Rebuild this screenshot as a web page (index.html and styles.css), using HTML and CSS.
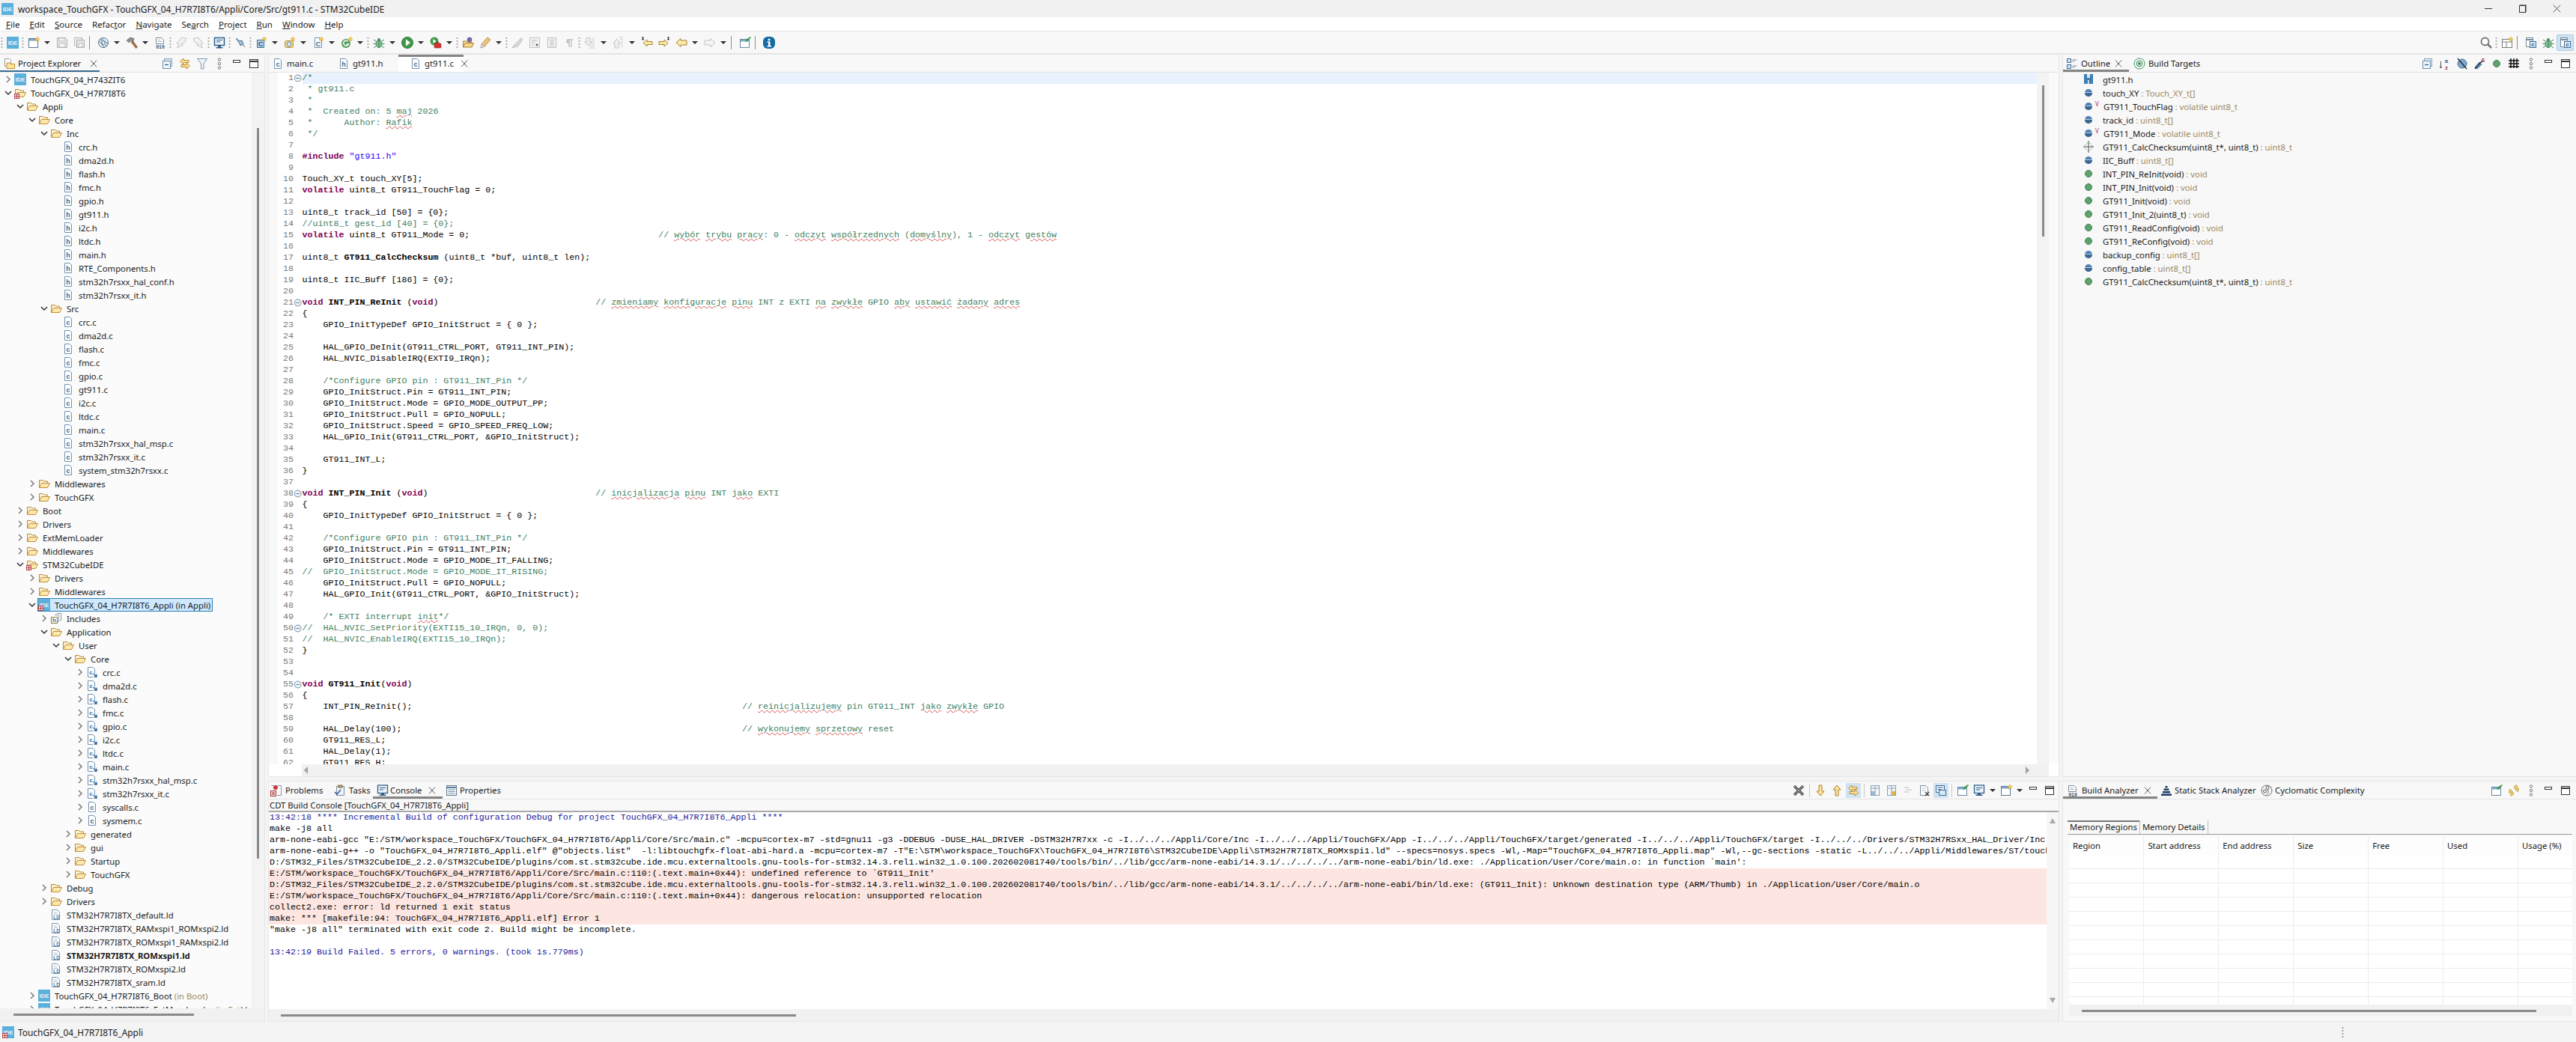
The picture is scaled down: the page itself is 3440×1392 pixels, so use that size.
FILE: index.html
```html
<!DOCTYPE html>
<html lang="en">
<head>
    <meta charset="UTF-8">
    <title>workspace_TouchGFX - STM32CubeIDE</title>
    <link rel="stylesheet" href="styles.css">
</head>
<body>
    <!-- Icon set -->
    <svg class="defs" xmlns="http://www.w3.org/2000/svg">
        <symbol id="ide" viewBox="0 0 16 16"><rect x="0" y="0" width="16" height="16" fill="#5cb0dc"/><text x="8" y="11" font-size="7.5" font-weight="700" fill="#eaf6fc" text-anchor="middle" font-family="Liberation Sans">IDE</text></symbol>
        <symbol id="mark" viewBox="0 0 16 16"><rect x="0.5" y="9.5" width="6" height="6" fill="#f6dede" stroke="#b5424a"/><path d="M0.5 12.5h6M3.5 9.5v6" stroke="#b5424a"/></symbol>
        <symbol id="folder" viewBox="0 0 16 16"><path d="M1.5 13.5v-10h5l1.5 1.5h4.5v2.5" fill="#fbf0d2" stroke="#b98a35"/><path d="M1.5 13.5l3-6h11l-3 6z" fill="#fde9ad" stroke="#c28f35"/></symbol>
        <symbol id="cfile" viewBox="0 0 16 16"><path d="M3.5 1.5h6.5l2.5 2.5v10.5h-9z" fill="#fff" stroke="#6d93b3"/><text x="8" y="12" font-size="9" font-weight="700" fill="#39688f" text-anchor="middle" font-family="Liberation Sans">c</text></symbol>
        <symbol id="hfile" viewBox="0 0 16 16"><path d="M3.5 1.5h6.5l2.5 2.5v10.5h-9z" fill="#fff" stroke="#6d93b3"/><text x="8" y="12" font-size="9" font-weight="700" fill="#39688f" text-anchor="middle" font-family="Liberation Sans">h</text></symbol>
        <symbol id="clink" viewBox="0 0 16 16"><path d="M2.5 1.5h6.5l2.5 2.5v10.5h-9z" fill="#fff" stroke="#6d93b3"/><text x="6.5" y="11" font-size="8" font-weight="700" fill="#39688f" text-anchor="middle" font-family="Liberation Sans">c</text><path d="M9 9h6v6H9z" fill="#dbe8f3"/><path d="M10 10l4 4m0-3v3h-3" fill="none" stroke="#2d5f8f" stroke-width="1.3"/></symbol>
        <symbol id="ld" viewBox="0 0 16 16"><path d="M2.5 1.5h7l3 3v10h-10z" fill="#fff" stroke="#7b98b0"/><path d="M4.5 5h5M4.5 7.5h6" stroke="#a9bccb"/><text x="8.5" y="14" font-size="6.5" font-weight="700" fill="#3a6f9e" text-anchor="middle" font-family="Liberation Sans">LD</text></symbol>
        <symbol id="incl" viewBox="0 0 16 16"><path d="M9 1.5h5.5v9H13M6 3.5h5.5v9H10" fill="#fff" stroke="#8c9aa5"/><rect x="1.5" y="6.5" width="8" height="8" fill="#fff" stroke="#8c7a45"/><text x="5.5" y="13" font-size="8" font-weight="700" fill="#39688f" text-anchor="middle" font-family="Liberation Sans">h</text></symbol>
        <symbol id="right" viewBox="0 0 12 12"><path d="M4 2l4 4-4 4" fill="none" stroke="#7a7a7a" stroke-width="1.5"/></symbol>
        <symbol id="down" viewBox="0 0 12 12"><path d="M2 4l4 4 4-4" fill="none" stroke="#333" stroke-width="1.5"/></symbol>
        <symbol id="close" viewBox="0 0 16 16"><path d="M3.5 3l9 10M12.5 3l-9 10" fill="none" stroke="#444" stroke-width="1"/></symbol>
        <symbol id="drop" viewBox="0 0 8 8"><path d="M0 2h8L4 6z" fill="#333"/></symbol>
        <symbol id="fold" viewBox="0 0 10 10"><circle cx="5" cy="5" r="3.8" fill="#eef3f8" stroke="#8ba3b8"/><path d="M3 5h4" stroke="#5d7f9c"/></symbol>
        <symbol id="explorer" viewBox="0 0 16 16"><path d="M2.5 1.5h6l2 2v8h-8z" fill="#fff" stroke="#9a9a9a"/><path d="M5 7h4l1 1.5h5.500v6H5z" fill="#fde29a" stroke="#c28f35"/></symbol>
        <symbol id="collapse" viewBox="0 0 16 16"><rect x="3.500" y="1.500" width="10" height="10" fill="#dfeaf4" stroke="#87a3bb"/><rect x="1.500" y="4.500" width="10" height="10" fill="#eef4f9" stroke="#6f8fab"/><path d="M4 9.500h5" stroke="#3b5f80" stroke-width="1.200"/></symbol>
        <symbol id="sync" viewBox="0 0 16 16"><path d="M6 1l-4.500 4 4.500 4V6.500h7v-3H6zM10 7v2.500H3v3h7V15l4.500-4z" fill="#fbe39a" stroke="#c08a2c"/></symbol>
        <symbol id="filter" viewBox="0 0 16 16"><path d="M1.500 1.500h13L10 8v7H6.500V8z" fill="#eef3f8" stroke="#7f9ab2"/></symbol>
        <symbol id="dots" viewBox="0 0 16 16"><circle cx="8" cy="2.500" r="1.700" fill="none" stroke="#777"/><circle cx="8" cy="8" r="1.700" fill="none" stroke="#777"/><circle cx="8" cy="13.500" r="1.700" fill="none" stroke="#777"/></symbol>
        <symbol id="min" viewBox="0 0 16 16"><rect x="3.500" y="3.500" width="9" height="3" fill="#fff" stroke="#333"/></symbol>
        <symbol id="max" viewBox="0 0 16 16"><rect x="2.500" y="2.500" width="11" height="11" fill="#fff" stroke="#333"/><path d="M2.500 5h11" stroke="#333" stroke-width="2"/></symbol>
        <symbol id="new" viewBox="0 0 16 16"><rect x="1.500" y="2.500" width="12" height="12" fill="#fff" stroke="#5b7a94"/><rect x="2" y="3" width="11" height="2.500" fill="#7fa5c6"/><path d="M13 0l1 2 2 .5-1.500 1.500.3 2-1.800-1-1.800 1 .3-2L10 2.500l2-.5z" fill="#f6cf55" stroke="#c9952a" stroke-width=".5"/></symbol>
        <symbol id="save" viewBox="0 0 16 16"><path d="M1.500 1.500h11l2 2v11h-13z" fill="#e8e8e8" stroke="#b0b0b0"/><rect x="4" y="2" width="7" height="4" fill="#f7f7f7" stroke="#bbb"/><rect x="4" y="9" width="8" height="5" fill="#f7f7f7" stroke="#bbb"/></symbol>
        <symbol id="saveall" viewBox="0 0 16 16"><rect x="1.500" y="1.500" width="10" height="10" fill="#eee" stroke="#b8b8b8"/><rect x="4.500" y="4.500" width="10" height="10" fill="#e6e6e6" stroke="#b0b0b0"/><rect x="7" y="9" width="5" height="5" fill="#f8f8f8" stroke="#bbb"/></symbol>
        <symbol id="gear" viewBox="0 0 16 16"><circle cx="8" cy="8" r="6.500" fill="#e5edf4" stroke="#4d6f8d"/><path d="M3 3l10 10M5 2.500l9 7M2.500 6l7 8" stroke="#4d6f8d"/><circle cx="8" cy="8" r="2.200" fill="#fff" stroke="#4d6f8d"/></symbol>
        <symbol id="hammer" viewBox="0 0 16 16"><path d="M7 7l6.500 8.500 2-1.500L9.500 5.500z" fill="#a6713f" stroke="#6e4a26" stroke-width=".6"/><path d="M1 5l5-4 5 1.500-1 3.500-3-1-2.500 3z" fill="#8c8c8c" stroke="#5c5c5c" stroke-width=".6"/></symbol>
        <symbol id="bin" viewBox="0 0 16 16"><path d="M2.500 1.500h7l3 3v5h-10z" fill="#fff" stroke="#7b8a99"/><path d="M4.500 4.500h4M4.500 6.500h6" stroke="#a9b8c4"/><text x="8" y="15.500" font-size="6.500" font-weight="700" fill="#3c5c78" text-anchor="middle" font-family="Liberation Mono">010</text></symbol>
        <symbol id="undo" viewBox="0 0 16 16"><path d="M15 2.500L8.500 1 2 9l3 1L2.500 15l8-4-2-1L13 7z" fill="#f1f1f1" stroke="#c4c4c4"/></symbol>
        <symbol id="redo" viewBox="0 0 16 16"><path d="M1 2.500L7.500 1 14 9l-3 1 2.500 5-8-4 2-1L3 7z" fill="#f1f1f1" stroke="#c4c4c4"/></symbol>
        <symbol id="monitor" viewBox="0 0 16 16"><rect x="1.500" y="1.500" width="13" height="10" fill="#eef5fb" stroke="#2f5f8a" stroke-width="1.500"/><path d="M4 4.500h8M4 7h5" stroke="#2f5f8a"/><path d="M6 12v2H3.500v1.500h9V14H10v-2z" fill="#2f5f8a"/></symbol>
        <symbol id="pin" viewBox="0 0 16 16"><path d="M2 2l5 4 3-1 2 5-4 2-1-3z" fill="#a9c1d6" stroke="#4d6f8d"/><path d="M11 10l3 4" stroke="#666"/></symbol>
        <symbol id="newc" viewBox="0 0 16 16"><path d="M2.500 4.500h9v10h-9z" fill="#b8d4ea" stroke="#3f6c92"/><text x="7" y="13" font-size="9" font-weight="700" fill="#24557f" text-anchor="middle" font-family="Liberation Sans">C</text><path d="M12 0l1 2 2 .5-1.500 1.500.3 2-1.800-1-1.800 1 .3-2L9 2.500l2-.5z" fill="#f6cf55" stroke="#c9952a" stroke-width=".5"/></symbol>
        <symbol id="newl" viewBox="0 0 16 16"><rect x="1.500" y="5.500" width="11" height="9" rx="2" fill="#f7dc97" stroke="#b68b3a"/><circle cx="7" cy="10" r="3" fill="#dfe9f1" stroke="#5c7e9b"/><path d="M12 0l1 2 2 .5-1.500 1.500.3 2-1.800-1-1.800 1 .3-2L9 2.500l2-.5z" fill="#f6cf55" stroke="#c9952a" stroke-width=".5"/></symbol>
        <symbol id="newf" viewBox="0 0 16 16"><path d="M3.500 1.500h6v2h3v11h-9z" fill="#fff" stroke="#6d93b3"/><text x="8" y="12.500" font-size="9" font-weight="700" fill="#39688f" text-anchor="middle" font-family="Liberation Sans">C</text><path d="M12 0l1 2 2 .5-1.500 1.500.3 2-1.800-1-1.800 1 .3-2L9 2.500l2-.5z" fill="#f6cf55" stroke="#c9952a" stroke-width=".5"/></symbol>
        <symbol id="newg" viewBox="0 0 16 16"><circle cx="7" cy="9" r="6" fill="#4d9a57"/><path d="M10 6.500A3.500 3.500 0 1 0 10.500 10H7.500" fill="none" stroke="#fff" stroke-width="1.500"/><path d="M13 0l1 2 2 .5-1.500 1.500.3 2-1.800-1-1.800 1 .3-2L10 2.500l2-.5z" fill="#f6cf55" stroke="#c9952a" stroke-width=".5"/></symbol>
        <symbol id="bug" viewBox="0 0 16 16"><ellipse cx="8" cy="9.500" rx="4" ry="5" fill="#7fbf8e" stroke="#3f7f5f"/><circle cx="8" cy="4" r="2" fill="#4d8f66"/><path d="M4 6L1 4M4 9.500H0.500M4 12.500l-3 2.500M12 6l3-2M12 9.500h3.500M12 12.500l3 2.500M8 5v9" stroke="#3f7f5f"/></symbol>
        <symbol id="run" viewBox="0 0 16 16"><circle cx="8" cy="8" r="7.500" fill="#3e9a49" stroke="#2b7a36"/><path d="M6 3.500l6 4.500-6 4.500z" fill="#fff"/></symbol>
        <symbol id="ext" viewBox="0 0 16 16"><circle cx="6" cy="6" r="5.500" fill="#3e9a49"/><path d="M4.500 3l4 3-4 3z" fill="#fff"/><rect x="6" y="9" width="9" height="6" rx="1" fill="#d1342f" stroke="#9c2320" stroke-width=".6"/><path d="M9 9V7.500h3V9" fill="none" stroke="#9c2320"/></symbol>
        <symbol id="openf" viewBox="0 0 16 16"><path d="M1.500 14V6h5l1 1h5v1.500" fill="#f7e3ab" stroke="#a97e2f"/><path d="M1.500 14l2.500-5.500h11.500L13 14z" fill="#f7d78a" stroke="#a97e2f"/><circle cx="10" cy="4" r="3" fill="#7a67a8" stroke="#53447e" stroke-width=".6"/></symbol>
        <symbol id="crayon" viewBox="0 0 16 16"><path d="M2 15l1-5L11 1l4 3-8 9z" fill="#f1c27d" stroke="#b58a45"/><path d="M2 15l1-5 4 3z" fill="#eee" stroke="#aaa"/></symbol>
        <symbol id="gpen" viewBox="0 0 16 16"><path d="M1 15l2-3L13 1.500l2 2-6 9z" fill="#d8d8d8" stroke="#c0c0c0"/></symbol>
        <symbol id="gdoc" viewBox="0 0 16 16"><rect x="1.500" y="1.500" width="13" height="13" fill="#f4f4f4" stroke="#c2c2c2"/><path d="M4 5h7M4 8h4M9 11l3-2v4zM4 11h3" stroke="#b5b5b5"/></symbol>
        <symbol id="glines" viewBox="0 0 16 16"><rect x="2.500" y="1.500" width="11" height="13" fill="#f6f6f6" stroke="#bdbdbd"/><path d="M5 4.500h6M5 7h6M5 9.500h6M5 12h6" stroke="#b5b5b5"/></symbol>
        <symbol id="para" viewBox="0 0 16 16"><path d="M7 3h6v1.500h-1.500V14H10V4.500H8.800V14H7.300V9A3 3 0 0 1 7 3z" fill="#c4c4c4"/></symbol>
        <symbol id="gdown" viewBox="0 0 16 16"><path d="M3 1.500h5v5h2.500L5.500 12 1 6.500h2z" fill="#efefef" stroke="#c4c4c4"/><path d="M10 3h4M10 6h4M9 9h5M7 12h7M7 15h7" stroke="#c9c9c9"/></symbol>
        <symbol id="gup" viewBox="0 0 16 16"><path d="M3 15V9H1l4.500-6 5 6H8v6z" fill="#efefef" stroke="#c4c4c4"/><path d="M9 1h5M10 4h4M11 7h3M11 10h3M11 13h3" stroke="#c9c9c9"/></symbol>
        <symbol id="yl" viewBox="0 0 16 16"><path d="M7 2.500L1 8l6 5.500V11h8V5H7z" fill="#fbe9a8" stroke="#a9822e"/></symbol>
        <symbol id="yr" viewBox="0 0 16 16"><path d="M9 2.500L15 8l-6 5.500V11H1V5h8z" fill="#fbe9a8" stroke="#a9822e"/></symbol>
        <symbol id="yls" viewBox="0 0 16 16"><path d="M8 4L3 8.500 8 13v-2.500h7v-4H8z" fill="#fbe9a8" stroke="#a9822e"/><path d="M1 1l3 3M4 1L1 4M2.500 0v5" stroke="#444"/></symbol>
        <symbol id="yrs" viewBox="0 0 16 16"><path d="M8 4l5 4.500L8 13v-2.500H1v-4h7z" fill="#fbe9a8" stroke="#a9822e"/><path d="M12 1l3 3M15 1l-3 3M13.500 0v5" stroke="#444"/></symbol>
        <symbol id="gr" viewBox="0 0 16 16"><path d="M9 2.500L15 8l-6 5.500V11H1V5h8z" fill="#f4f4f4" stroke="#c2c2c2"/></symbol>
        <symbol id="task" viewBox="0 0 16 16"><rect x="1.500" y="3.500" width="12" height="11" fill="#fff" stroke="#6a8aa5"/><rect x="2" y="4" width="11" height="2.500" fill="#88add0"/><path d="M15 0l1 1-5 5-3 1 1-3z" fill="#3e9a49"/></symbol>
        <symbol id="info" viewBox="0 0 16 16"><rect x="0" y="0" width="16" height="16" rx="6" fill="#146ca3"/><circle cx="8" cy="4" r="1.500" fill="#fff"/><path d="M5.500 6.500H9.500V12H11v1.500H5.500V12H7V8H5.500z" fill="#fff"/></symbol>
        <symbol id="search" viewBox="0 0 16 16"><circle cx="6.500" cy="6.500" r="5" fill="#fff" stroke="#777" stroke-width="1.800"/><path d="M10 10l5 5" stroke="#777" stroke-width="2.500"/></symbol>
        <symbol id="persp" viewBox="0 0 16 16"><rect x="1.500" y="3.500" width="13" height="11" fill="#fff" stroke="#7b7b7b"/><path d="M1.500 7h13M7 7v7.500" stroke="#7b7b7b"/><path d="M13 0l1 2 2 .5-1.500 1.500.3 2-1.800-1-1.800 1 .3-2L10 2.500l2-.5z" fill="#f6cf55" stroke="#c9952a" stroke-width=".5"/></symbol>
        <symbol id="pc" viewBox="0 0 16 16"><rect x="1.500" y="1.500" width="9" height="12" fill="#fff" stroke="#7a8a99"/><path d="M1.500 4h9" stroke="#7a8a99" stroke-width="2"/><rect x="6.500" y="6.500" width="8" height="8" fill="#e3f0f9" stroke="#3b6a95"/><text x="10.500" y="13" font-size="8" font-weight="700" fill="#24557f" text-anchor="middle" font-family="Liberation Sans">c</text></symbol>
        <symbol id="outline" viewBox="0 0 16 16"><rect x="1.500" y="1.500" width="5" height="5" fill="#cfe0ee" stroke="#3f6f98"/><rect x="1.500" y="9.500" width="5" height="5" fill="#cfe0ee" stroke="#3f6f98"/><path d="M8.500 3h6M8.500 5h3M8.500 11h6M8.500 13h3" stroke="#7a8a99"/></symbol>
        <symbol id="target" viewBox="0 0 16 16"><circle cx="8" cy="8" r="7" fill="#fff" stroke="#3f8f5f"/><circle cx="8" cy="8" r="4" fill="#cfe8d5" stroke="#3f8f5f"/><circle cx="8" cy="8" r="1.700" fill="#2f7f4f"/></symbol>
        <symbol id="az" viewBox="0 0 16 16"><path d="M2.500 5v9M1 12l1.500 2L4 12" fill="none" stroke="#555"/><text x="10" y="7" font-size="8" font-weight="700" fill="#2f6f9e" text-anchor="middle" font-family="Liberation Sans">a</text><text x="10" y="15.500" font-size="8" font-weight="700" fill="#9d3b7d" text-anchor="middle" font-family="Liberation Sans">z</text></symbol>
        <symbol id="hidef" viewBox="0 0 16 16"><circle cx="8" cy="8" r="6" fill="#7da8cf" stroke="#3f6f98"/><path d="M2 1l12 14" stroke="#223" stroke-width="1.300"/></symbol>
        <symbol id="hides" viewBox="0 0 16 16"><path d="M2 13l6-7 3 3-6 6z" fill="#7da8cf" stroke="#3f6f98"/><path d="M2 15L12 4" stroke="#223" stroke-width="1.200"/><text x="13" y="6" font-size="6.500" font-weight="700" fill="#a5325a" text-anchor="middle" font-family="Liberation Sans">S</text></symbol>
        <symbol id="hidem" viewBox="0 0 16 16"><path d="M4 1v13M8 1v13M12 1v13M1 4h14M1 8h14M1 12h14" stroke="#111" stroke-width="1.500"/></symbol>
        <symbol id="gdot" viewBox="0 0 16 16"><circle cx="8" cy="8" r="4.500" fill="#5da36b" stroke="#3f8050"/></symbol>
        <symbol id="bdot" viewBox="0 0 16 16"><circle cx="8" cy="8" r="5" fill="#4f82b8"/><path d="M3 8a5 5 0 0 0 10 0z" fill="#3c6894"/><path d="M3 7.500h10" stroke="#fff" stroke-opacity=".6"/></symbol>
        <symbol id="inc" viewBox="0 0 16 16"><path d="M2 1h12v13H8.500V9H7v5H2z" fill="#3d7fb3"/><path d="M6 1h4v5H6z" fill="#d8e7f3"/></symbol>
        <symbol id="proto" viewBox="0 0 16 16"><circle cx="8" cy="8" r="5" fill="none" stroke="#6aa57a" stroke-dasharray="2 1.500"/><path d="M8 0v16M1 8h14" stroke="#555"/></symbol>
        <symbol id="cross" viewBox="0 0 16 16"><path d="M2 2l12 12M14 2L2 14" stroke="#555" stroke-width="3.500"/><path d="M2 2l12 12M14 2L2 14" stroke="#aaa" stroke-width="1"/></symbol>
        <symbol id="ydown" viewBox="0 0 16 16"><path d="M6 1h4v8h3l-5 6-5-6h3z" fill="#fbe39a" stroke="#a9822e"/></symbol>
        <symbol id="yup" viewBox="0 0 16 16"><path d="M6 15h4V7h3L8 1 3 7h3z" fill="#fbe39a" stroke="#a9822e"/></symbol>
        <symbol id="twolocks" viewBox="0 0 16 16"><rect x="2.500" y="1.500" width="11" height="13" fill="#f3f6f9" stroke="#8aa0b3"/><path d="M2.500 5h11M8 1.500v13" stroke="#8aa0b3"/><rect x="3" y="9" width="5" height="5" fill="#9db7cd"/></symbol>
        <symbol id="twolock2" viewBox="0 0 16 16"><rect x="2.500" y="1.500" width="11" height="13" fill="#f3f6f9" stroke="#8aa0b3"/><path d="M2.500 5h11M8 1.500v13" stroke="#8aa0b3"/><rect x="8" y="9" width="5" height="5" fill="#e0b44c"/></symbol>
        <symbol id="glist" viewBox="0 0 16 16"><path d="M3 4h6M5 7h8M3 10h6" stroke="#bdbdbd"/></symbol>
        <symbol id="clearx" viewBox="0 0 16 16"><path d="M2.500 1.500h7l3 3v10h-10z" fill="#fff" stroke="#7a8a99"/><path d="M4.500 5h5M4.500 8h5" stroke="#a9b8c4"/><path d="M9 10l5 5M14 10l-5 5" stroke="#444" stroke-width="1.500"/></symbol>
        <symbol id="pinc" viewBox="0 0 16 16"><rect x="1.500" y="1.500" width="11" height="9" fill="#eef5fb" stroke="#3f6f98"/><path d="M3.500 4h7M3.500 6.500h5" stroke="#3f6f98"/><rect x="5.500" y="7.500" width="9" height="7" fill="#d7e8f5" stroke="#3f6f98"/></symbol>
        <symbol id="problems" viewBox="0 0 16 16"><circle cx="7" cy="4" r="3" fill="#c9343a"/><path d="M1.500 1.500h3M10 1.500h4.500v13H9" fill="none" stroke="#8a9aa8"/><rect x="0.500" y="8.500" width="7" height="7" fill="#f1dcdc" stroke="#a33"/><path d="M2 10l4 4M6 10l-4 4" stroke="#a33"/></symbol>
        <symbol id="tasks" viewBox="0 0 16 16"><rect x="3.500" y="2.500" width="10" height="12" fill="#f1f4f8" stroke="#7f8f9e"/><rect x="6" y="1" width="5" height="3" fill="#b9a46a" stroke="#7f6f3e"/><path d="M1 10l3 3 5-6" fill="none" stroke="#2f5fa0" stroke-width="1.600"/></symbol>
        <symbol id="console" viewBox="0 0 16 16"><rect x="1.500" y="1" width="13" height="10.500" fill="#eaf2f9" stroke="#2f5f8a" stroke-width="1.300"/><path d="M4 4.500h8M4 7h5" stroke="#2f5f8a"/><path d="M6 12v1.500H3.500V15h9v-1.500H10V12z" fill="#2f5f8a"/></symbol>
        <symbol id="props" viewBox="0 0 16 16"><rect x="1.500" y="1.500" width="13" height="13" fill="#f3f6f9" stroke="#5e7c96"/><path d="M1.500 4h13" stroke="#5e7c96" stroke-width="2"/><path d="M3.500 7h9M3.500 9.500h9M3.500 12h9" stroke="#7a92a6"/></symbol>
        <symbol id="stack" viewBox="0 0 16 16"><path d="M6.500 2h3v2.500h-3zM4.500 5.500h7V8h-7zM3 9h10v2.500H3zM1 12.500h14V15H1z" fill="#1f3f66"/></symbol>
        <symbol id="cyclo" viewBox="0 0 16 16"><circle cx="8" cy="8" r="7" fill="none" stroke="#666"/><circle cx="9" cy="4.500" r="2" fill="none" stroke="#555"/><circle cx="5.500" cy="9" r="2" fill="none" stroke="#555"/><path d="M9 6.500c2 3 1 5-1 6.500" fill="none" stroke="#555"/></symbol>
        <symbol id="refresh" viewBox="0 0 16 16"><path d="M8 3l4-2.500V3c3 1 3 5 1 7l-1.500-1.500c.8-1.300.5-3-1-3.500v2.500zM8 13l-4 2.500V13c-3-1-3-5-1-7l1.500 1.500c-.8 1.300-.5 3 1 3.500V8.500z" fill="#f3cf63" stroke="#a9822e" stroke-width=".6"/></symbol>
    </svg>

    <!-- Title bar -->
    <header class="titlebar">
        <svg class="i"><use href="#ide"/></svg>
        <span class="title-text">workspace_TouchGFX - TouchGFX_04_H7R7I8T6/Appli/Core/Src/gt911.c - STM32CubeIDE</span>
        <div class="winbtns">
            <span class="winbtn win-min"></span>
            <span class="winbtn win-max"></span>
            <svg class="win-close" viewBox="0 0 14 14"><path d="M1 1l12 12M13 1L1 13" stroke="#333" stroke-width="1"/></svg>
        </div>
    </header>

    <!-- Menu -->
    <nav class="menubar">
        <span><u>F</u>ile</span><span><u>E</u>dit</span><span><u>S</u>ource</span><span>Refac<u>t</u>or</span><span><u>N</u>avigate</span><span>Se<u>a</u>rch</span><span><u>P</u>roject</span><span><u>R</u>un</span><span><u>W</u>indow</span><span><u>H</u>elp</span>
    </nav>

    <!-- Main toolbar -->
    <div class="toolbar">
        <i class="grip"></i>
        <b class="tb"><svg class="i"><use href="#ide"/></svg></b><i class="grip"></i>
        <b class="tb"><svg class="i"><use href="#new"/></svg></b><b class="dd"><svg class="d"><use href="#drop"/></svg></b>
        <b class="tb"><svg class="i"><use href="#save"/></svg></b><b class="tb"><svg class="i"><use href="#saveall"/></svg></b><i class="sep"></i>
        <b class="tb"><svg class="i"><use href="#gear"/></svg></b><b class="dd"><svg class="d"><use href="#drop"/></svg></b>
        <b class="tb"><svg class="i"><use href="#hammer"/></svg></b><b class="dd"><svg class="d"><use href="#drop"/></svg></b>
        <b class="tb"><svg class="i"><use href="#bin"/></svg></b><i class="grip"></i>
        <b class="tb"><svg class="i"><use href="#undo"/></svg></b><b class="tb"><svg class="i"><use href="#redo"/></svg></b><i class="grip"></i>
        <b class="tb"><svg class="i"><use href="#monitor"/></svg></b><i class="grip"></i>
        <b class="tb"><svg class="i"><use href="#pin"/></svg></b><i class="grip"></i>
        <b class="tb"><svg class="i"><use href="#newc"/></svg></b><b class="dd"><svg class="d"><use href="#drop"/></svg></b>
        <b class="tb"><svg class="i"><use href="#newl"/></svg></b><b class="dd"><svg class="d"><use href="#drop"/></svg></b>
        <b class="tb"><svg class="i"><use href="#newf"/></svg></b><b class="dd"><svg class="d"><use href="#drop"/></svg></b>
        <b class="tb"><svg class="i"><use href="#newg"/></svg></b><b class="dd"><svg class="d"><use href="#drop"/></svg></b><i class="grip"></i>
        <b class="tb"><svg class="i"><use href="#bug"/></svg></b><b class="dd"><svg class="d"><use href="#drop"/></svg></b>
        <b class="tb"><svg class="i"><use href="#run"/></svg></b><b class="dd"><svg class="d"><use href="#drop"/></svg></b>
        <b class="tb"><svg class="i"><use href="#ext"/></svg></b><b class="dd"><svg class="d"><use href="#drop"/></svg></b><i class="grip"></i>
        <b class="tb"><svg class="i"><use href="#openf"/></svg></b>
        <b class="tb"><svg class="i"><use href="#crayon"/></svg></b><b class="dd"><svg class="d"><use href="#drop"/></svg></b><i class="grip"></i>
        <b class="tb"><svg class="i"><use href="#gpen"/></svg></b><b class="tb"><svg class="i"><use href="#gdoc"/></svg></b><b class="tb"><svg class="i"><use href="#glines"/></svg></b><b class="tb"><svg class="i"><use href="#para"/></svg></b><i class="grip"></i>
        <b class="tb"><svg class="i"><use href="#gdown"/></svg></b><b class="dd"><svg class="d"><use href="#drop"/></svg></b>
        <b class="tb"><svg class="i"><use href="#gup"/></svg></b><b class="dd"><svg class="d"><use href="#drop"/></svg></b>
        <b class="tb"><svg class="i"><use href="#yls"/></svg></b><b class="tb"><svg class="i"><use href="#yrs"/></svg></b>
        <b class="tb"><svg class="i"><use href="#yl"/></svg></b><b class="dd"><svg class="d"><use href="#drop"/></svg></b>
        <b class="tb"><svg class="i"><use href="#gr"/></svg></b><b class="dd"><svg class="d"><use href="#drop"/></svg></b><i class="sep"></i>
        <b class="tb"><svg class="i"><use href="#task"/></svg></b><i class="sep"></i>
        <b class="tb"><svg class="i"><use href="#info"/></svg></b>

        <div class="toolbar-right">
            <b class="tb"><svg class="i"><use href="#search"/></svg></b><i class="grip"></i>
            <b class="tb"><svg class="i"><use href="#persp"/></svg></b><i class="sep"></i>
            <b class="tb"><svg class="i"><use href="#pc"/></svg></b><b class="tb"><svg class="i"><use href="#bug"/></svg></b><b class="tb on"><svg class="i"><use href="#pc"/></svg></b>
        </div>
    </div>

    <main class="workbench">
        <!-- Project Explorer -->
        <section class="panel left">
            <div class="tabs">
                <div class="tab active-blue explorer-tab"><svg class="i"><use href="#explorer"/></svg><span>Project Explorer</span><svg class="i tabx"><use href="#close"/></svg></div>
                <div class="tools">
                    <svg class="i"><use href="#collapse"/></svg><svg class="i"><use href="#sync"/></svg><svg class="i"><use href="#filter"/></svg><svg class="i"><use href="#dots"/></svg><svg class="i"><use href="#min"/></svg><svg class="i"><use href="#max"/></svg>
                </div>
            </div>
            <div class="tree-wrap">
                <div class="tree">
                    <div class="row l0"><svg class="chev"><use href="#right"/></svg><svg class="i"><use href="#ide"/></svg><span>TouchGFX_04_H743ZIT6</span></div>
                    <div class="row l0"><svg class="chev"><use href="#down"/></svg><svg class="i"><use href="#folder"/><use href="#mark"/></svg><span>TouchGFX_04_H7R7I8T6</span></div>
                    <div class="row l1"><svg class="chev"><use href="#down"/></svg><svg class="i"><use href="#folder"/></svg><span>Appli</span></div>
                    <div class="row l2"><svg class="chev"><use href="#down"/></svg><svg class="i"><use href="#folder"/></svg><span>Core</span></div>
                    <div class="row l3"><svg class="chev"><use href="#down"/></svg><svg class="i"><use href="#folder"/></svg><span>Inc</span></div>
                    <div class="row l4"><i class="chev"></i><svg class="i"><use href="#hfile"/></svg><span>crc.h</span></div>
                    <div class="row l4"><i class="chev"></i><svg class="i"><use href="#hfile"/></svg><span>dma2d.h</span></div>
                    <div class="row l4"><i class="chev"></i><svg class="i"><use href="#hfile"/></svg><span>flash.h</span></div>
                    <div class="row l4"><i class="chev"></i><svg class="i"><use href="#hfile"/></svg><span>fmc.h</span></div>
                    <div class="row l4"><i class="chev"></i><svg class="i"><use href="#hfile"/></svg><span>gpio.h</span></div>
                    <div class="row l4"><i class="chev"></i><svg class="i"><use href="#hfile"/></svg><span>gt911.h</span></div>
                    <div class="row l4"><i class="chev"></i><svg class="i"><use href="#hfile"/></svg><span>i2c.h</span></div>
                    <div class="row l4"><i class="chev"></i><svg class="i"><use href="#hfile"/></svg><span>ltdc.h</span></div>
                    <div class="row l4"><i class="chev"></i><svg class="i"><use href="#hfile"/></svg><span>main.h</span></div>
                    <div class="row l4"><i class="chev"></i><svg class="i"><use href="#hfile"/></svg><span>RTE_Components.h</span></div>
                    <div class="row l4"><i class="chev"></i><svg class="i"><use href="#hfile"/></svg><span>stm32h7rsxx_hal_conf.h</span></div>
                    <div class="row l4"><i class="chev"></i><svg class="i"><use href="#hfile"/></svg><span>stm32h7rsxx_it.h</span></div>
                    <div class="row l3"><svg class="chev"><use href="#down"/></svg><svg class="i"><use href="#folder"/></svg><span>Src</span></div>
                    <div class="row l4"><i class="chev"></i><svg class="i"><use href="#cfile"/></svg><span>crc.c</span></div>
                    <div class="row l4"><i class="chev"></i><svg class="i"><use href="#cfile"/></svg><span>dma2d.c</span></div>
                    <div class="row l4"><i class="chev"></i><svg class="i"><use href="#cfile"/></svg><span>flash.c</span></div>
                    <div class="row l4"><i class="chev"></i><svg class="i"><use href="#cfile"/></svg><span>fmc.c</span></div>
                    <div class="row l4"><i class="chev"></i><svg class="i"><use href="#cfile"/></svg><span>gpio.c</span></div>
                    <div class="row l4"><i class="chev"></i><svg class="i"><use href="#cfile"/></svg><span>gt911.c</span></div>
                    <div class="row l4"><i class="chev"></i><svg class="i"><use href="#cfile"/></svg><span>i2c.c</span></div>
                    <div class="row l4"><i class="chev"></i><svg class="i"><use href="#cfile"/></svg><span>ltdc.c</span></div>
                    <div class="row l4"><i class="chev"></i><svg class="i"><use href="#cfile"/></svg><span>main.c</span></div>
                    <div class="row l4"><i class="chev"></i><svg class="i"><use href="#cfile"/></svg><span>stm32h7rsxx_hal_msp.c</span></div>
                    <div class="row l4"><i class="chev"></i><svg class="i"><use href="#cfile"/></svg><span>stm32h7rsxx_it.c</span></div>
                    <div class="row l4"><i class="chev"></i><svg class="i"><use href="#cfile"/></svg><span>system_stm32h7rsxx.c</span></div>
                    <div class="row l2"><svg class="chev"><use href="#right"/></svg><svg class="i"><use href="#folder"/></svg><span>Middlewares</span></div>
                    <div class="row l2"><svg class="chev"><use href="#right"/></svg><svg class="i"><use href="#folder"/></svg><span>TouchGFX</span></div>
                    <div class="row l1"><svg class="chev"><use href="#right"/></svg><svg class="i"><use href="#folder"/></svg><span>Boot</span></div>
                    <div class="row l1"><svg class="chev"><use href="#right"/></svg><svg class="i"><use href="#folder"/></svg><span>Drivers</span></div>
                    <div class="row l1"><svg class="chev"><use href="#right"/></svg><svg class="i"><use href="#folder"/></svg><span>ExtMemLoader</span></div>
                    <div class="row l1"><svg class="chev"><use href="#right"/></svg><svg class="i"><use href="#folder"/></svg><span>Middlewares</span></div>
                    <div class="row l1"><svg class="chev"><use href="#down"/></svg><svg class="i"><use href="#folder"/><use href="#mark"/></svg><span>STM32CubeIDE</span></div>
                    <div class="row l2"><svg class="chev"><use href="#right"/></svg><svg class="i"><use href="#folder"/></svg><span>Drivers</span></div>
                    <div class="row l2"><svg class="chev"><use href="#right"/></svg><svg class="i"><use href="#folder"/></svg><span>Middlewares</span></div>
                    <div class="row l2"><svg class="chev"><use href="#down"/></svg><div class="selected"><svg class="i"><use href="#ide"/><use href="#mark"/></svg><span>TouchGFX_04_H7R7I8T6_Appli (in Appli)</span></div></div>
                    <div class="row l3"><svg class="chev"><use href="#right"/></svg><svg class="i"><use href="#incl"/></svg><span>Includes</span></div>
                    <div class="row l3"><svg class="chev"><use href="#down"/></svg><svg class="i"><use href="#folder"/></svg><span>Application</span></div>
                    <div class="row l4"><svg class="chev"><use href="#down"/></svg><svg class="i"><use href="#folder"/></svg><span>User</span></div>
                    <div class="row l5"><svg class="chev"><use href="#down"/></svg><svg class="i"><use href="#folder"/></svg><span>Core</span></div>
                    <div class="row l6"><svg class="chev"><use href="#right"/></svg><svg class="i"><use href="#clink"/></svg><span>crc.c</span></div>
                    <div class="row l6"><svg class="chev"><use href="#right"/></svg><svg class="i"><use href="#clink"/></svg><span>dma2d.c</span></div>
                    <div class="row l6"><svg class="chev"><use href="#right"/></svg><svg class="i"><use href="#clink"/></svg><span>flash.c</span></div>
                    <div class="row l6"><svg class="chev"><use href="#right"/></svg><svg class="i"><use href="#clink"/></svg><span>fmc.c</span></div>
                    <div class="row l6"><svg class="chev"><use href="#right"/></svg><svg class="i"><use href="#clink"/></svg><span>gpio.c</span></div>
                    <div class="row l6"><svg class="chev"><use href="#right"/></svg><svg class="i"><use href="#clink"/></svg><span>i2c.c</span></div>
                    <div class="row l6"><svg class="chev"><use href="#right"/></svg><svg class="i"><use href="#clink"/></svg><span>ltdc.c</span></div>
                    <div class="row l6"><svg class="chev"><use href="#right"/></svg><svg class="i"><use href="#clink"/></svg><span>main.c</span></div>
                    <div class="row l6"><svg class="chev"><use href="#right"/></svg><svg class="i"><use href="#clink"/></svg><span>stm32h7rsxx_hal_msp.c</span></div>
                    <div class="row l6"><svg class="chev"><use href="#right"/></svg><svg class="i"><use href="#clink"/></svg><span>stm32h7rsxx_it.c</span></div>
                    <div class="row l6"><svg class="chev"><use href="#right"/></svg><svg class="i"><use href="#cfile"/></svg><span>syscalls.c</span></div>
                    <div class="row l6"><svg class="chev"><use href="#right"/></svg><svg class="i"><use href="#cfile"/></svg><span>sysmem.c</span></div>
                    <div class="row l5"><svg class="chev"><use href="#right"/></svg><svg class="i"><use href="#folder"/></svg><span>generated</span></div>
                    <div class="row l5"><svg class="chev"><use href="#right"/></svg><svg class="i"><use href="#folder"/></svg><span>gui</span></div>
                    <div class="row l5"><svg class="chev"><use href="#right"/></svg><svg class="i"><use href="#folder"/></svg><span>Startup</span></div>
                    <div class="row l5"><svg class="chev"><use href="#right"/></svg><svg class="i"><use href="#folder"/></svg><span>TouchGFX</span></div>
                    <div class="row l3"><svg class="chev"><use href="#right"/></svg><svg class="i"><use href="#folder"/></svg><span>Debug</span></div>
                    <div class="row l3"><svg class="chev"><use href="#right"/></svg><svg class="i"><use href="#folder"/></svg><span>Drivers</span></div>
                    <div class="row l3"><i class="chev"></i><svg class="i"><use href="#ld"/></svg><span>STM32H7R7I8TX_default.ld</span></div>
                    <div class="row l3"><i class="chev"></i><svg class="i"><use href="#ld"/></svg><span>STM32H7R7I8TX_RAMxspi1_ROMxspi2.ld</span></div>
                    <div class="row l3"><i class="chev"></i><svg class="i"><use href="#ld"/></svg><span>STM32H7R7I8TX_ROMxspi1_RAMxspi2.ld</span></div>
                    <div class="row l3"><i class="chev"></i><svg class="i"><use href="#ld"/></svg><span class="strong">STM32H7R7I8TX_ROMxspi1.ld</span></div>
                    <div class="row l3"><i class="chev"></i><svg class="i"><use href="#ld"/></svg><span>STM32H7R7I8TX_ROMxspi2.ld</span></div>
                    <div class="row l3"><i class="chev"></i><svg class="i"><use href="#ld"/></svg><span>STM32H7R7I8TX_sram.ld</span></div>
                    <div class="row l2"><svg class="chev"><use href="#right"/></svg><svg class="i"><use href="#ide"/></svg><span>TouchGFX_04_H7R7I8T6_Boot <em>(in Boot)</em></span></div>
                    <div class="row l2"><svg class="chev"><use href="#right"/></svg><svg class="i"><use href="#ide"/></svg><span>TouchGFX_04_H7R7I8T6_ExtMemLoader <em>(in ExtMemLoader)</em></span></div>
                </div>
                <div class="vscroll tree-vscroll"><i class="vthumb"></i></div>
            </div>
            <div class="hscroll tree-hscroll"><i class="hthumb"></i></div>
        </section>

        <!-- Editor -->
        <section class="panel editor">
            <div class="tabs">
                <div class="tab editor-tab first"><svg class="i"><use href="#cfile"/></svg><span>main.c</span></div>
                <div class="tab editor-tab second"><svg class="i"><use href="#hfile"/></svg><span>gt911.h</span></div>
                <div class="tab editor-tab current"><svg class="i"><use href="#cfile"/></svg><span>gt911.c</span><svg class="i tabx"><use href="#close"/></svg></div>
            </div>
            <div class="editor-body">
                <div class="code">
                    <div class="cl now"><i class="ruler"></i><span class="num">1</span><svg class="fold"><use href="#fold"/></svg><span class="src"><span class="cm">/*</span></span></div>
                    <div class="cl"><i class="ruler"></i><span class="num">2</span><i class="fold"></i><span class="src"><span class="cm"> * gt911.c</span></span></div>
                    <div class="cl"><i class="ruler"></i><span class="num">3</span><i class="fold"></i><span class="src"><span class="cm"> *</span></span></div>
                    <div class="cl"><i class="ruler"></i><span class="num">4</span><i class="fold"></i><span class="src"><span class="cm"> *  Created on: 5 <u>maj</u> 2026</span></span></div>
                    <div class="cl"><i class="ruler"></i><span class="num">5</span><i class="fold"></i><span class="src"><span class="cm"> *      Author: <u>Rafik</u></span></span></div>
                    <div class="cl"><i class="ruler"></i><span class="num">6</span><i class="fold"></i><span class="src"><span class="cm"> */</span></span></div>
                    <div class="cl"><i class="ruler"></i><span class="num">7</span><i class="fold"></i><span class="src"></span></div>
                    <div class="cl"><i class="ruler"></i><span class="num">8</span><i class="fold"></i><span class="src"><span class="kw">#include</span> <span class="str">"gt911.h"</span></span></div>
                    <div class="cl"><i class="ruler"></i><span class="num">9</span><i class="fold"></i><span class="src"></span></div>
                    <div class="cl"><i class="ruler"></i><span class="num">10</span><i class="fold"></i><span class="src">Touch_XY_t touch_XY[5];</span></div>
                    <div class="cl"><i class="ruler"></i><span class="num">11</span><i class="fold"></i><span class="src"><span class="kw">volatile</span> uint8_t GT911_TouchFlag = 0;</span></div>
                    <div class="cl"><i class="ruler"></i><span class="num">12</span><i class="fold"></i><span class="src"></span></div>
                    <div class="cl"><i class="ruler"></i><span class="num">13</span><i class="fold"></i><span class="src">uint8_t track_id [50] = {0};</span></div>
                    <div class="cl"><i class="ruler"></i><span class="num">14</span><i class="fold"></i><span class="src"><span class="cm">//uint8_t gest_id [40] = {0};</span></span></div>
                    <div class="cl"><i class="ruler"></i><span class="num">15</span><i class="fold"></i><span class="src"><span class="kw">volatile</span> uint8_t GT911_Mode = 0;                                    <span class="cm">// <u>wybór</u> <u>trybu</u> <u>pracy</u>: 0 - <u>odczyt</u> <u>współrzednych</u> (<u>domyślny</u>), 1 - <u>odczyt</u> <u>gestów</u></span></span></div>
                    <div class="cl"><i class="ruler"></i><span class="num">16</span><i class="fold"></i><span class="src"></span></div>
                    <div class="cl"><i class="ruler"></i><span class="num">17</span><i class="fold"></i><span class="src">uint8_t <b>GT911_CalcChecksum</b> (uint8_t *buf, uint8_t len);</span></div>
                    <div class="cl"><i class="ruler"></i><span class="num">18</span><i class="fold"></i><span class="src"></span></div>
                    <div class="cl"><i class="ruler"></i><span class="num">19</span><i class="fold"></i><span class="src">uint8_t IIC_Buff [186] = {0};</span></div>
                    <div class="cl"><i class="ruler"></i><span class="num">20</span><i class="fold"></i><span class="src"></span></div>
                    <div class="cl"><i class="ruler"></i><span class="num">21</span><svg class="fold"><use href="#fold"/></svg><span class="src"><span class="kw">void</span> <b>INT_PIN_ReInit</b> (<span class="kw">void</span>)                              <span class="cm">// <u>zmieniamy</u> <u>konfiguracje</u> <u>pinu</u> INT z EXTI <u>na</u> <u>zwykłe</u> GPIO <u>aby</u> <u>ustawić</u> <u>żadany</u> <u>adres</u></span></span></div>
                    <div class="cl"><i class="ruler"></i><span class="num">22</span><i class="fold"></i><span class="src">{</span></div>
                    <div class="cl"><i class="ruler"></i><span class="num">23</span><i class="fold"></i><span class="src">    GPIO_InitTypeDef GPIO_InitStruct = { 0 };</span></div>
                    <div class="cl"><i class="ruler"></i><span class="num">24</span><i class="fold"></i><span class="src"></span></div>
                    <div class="cl"><i class="ruler"></i><span class="num">25</span><i class="fold"></i><span class="src">    HAL_GPIO_DeInit(GT911_CTRL_PORT, GT911_INT_PIN);</span></div>
                    <div class="cl"><i class="ruler"></i><span class="num">26</span><i class="fold"></i><span class="src">    HAL_NVIC_DisableIRQ(EXTI9_IRQn);</span></div>
                    <div class="cl"><i class="ruler"></i><span class="num">27</span><i class="fold"></i><span class="src"></span></div>
                    <div class="cl"><i class="ruler"></i><span class="num">28</span><i class="fold"></i><span class="src">    <span class="cm">/*Configure GPIO pin : GT911_INT_Pin */</span></span></div>
                    <div class="cl"><i class="ruler"></i><span class="num">29</span><i class="fold"></i><span class="src">    GPIO_InitStruct.Pin = GT911_INT_PIN;</span></div>
                    <div class="cl"><i class="ruler"></i><span class="num">30</span><i class="fold"></i><span class="src">    GPIO_InitStruct.Mode = GPIO_MODE_OUTPUT_PP;</span></div>
                    <div class="cl"><i class="ruler"></i><span class="num">31</span><i class="fold"></i><span class="src">    GPIO_InitStruct.Pull = GPIO_NOPULL;</span></div>
                    <div class="cl"><i class="ruler"></i><span class="num">32</span><i class="fold"></i><span class="src">    GPIO_InitStruct.Speed = GPIO_SPEED_FREQ_LOW;</span></div>
                    <div class="cl"><i class="ruler"></i><span class="num">33</span><i class="fold"></i><span class="src">    HAL_GPIO_Init(GT911_CTRL_PORT, &amp;GPIO_InitStruct);</span></div>
                    <div class="cl"><i class="ruler"></i><span class="num">34</span><i class="fold"></i><span class="src"></span></div>
                    <div class="cl"><i class="ruler"></i><span class="num">35</span><i class="fold"></i><span class="src">    GT911_INT_L;</span></div>
                    <div class="cl"><i class="ruler"></i><span class="num">36</span><i class="fold"></i><span class="src">}</span></div>
                    <div class="cl"><i class="ruler"></i><span class="num">37</span><i class="fold"></i><span class="src"></span></div>
                    <div class="cl"><i class="ruler"></i><span class="num">38</span><svg class="fold"><use href="#fold"/></svg><span class="src"><span class="kw">void</span> <b>INT_PIN_Init</b> (<span class="kw">void</span>)                                <span class="cm">// <u>inicjalizacja</u> <u>pinu</u> INT <u>jako</u> EXTI</span></span></div>
                    <div class="cl"><i class="ruler"></i><span class="num">39</span><i class="fold"></i><span class="src">{</span></div>
                    <div class="cl"><i class="ruler"></i><span class="num">40</span><i class="fold"></i><span class="src">    GPIO_InitTypeDef GPIO_InitStruct = { 0 };</span></div>
                    <div class="cl"><i class="ruler"></i><span class="num">41</span><i class="fold"></i><span class="src"></span></div>
                    <div class="cl"><i class="ruler"></i><span class="num">42</span><i class="fold"></i><span class="src">    <span class="cm">/*Configure GPIO pin : GT911_INT_Pin */</span></span></div>
                    <div class="cl"><i class="ruler"></i><span class="num">43</span><i class="fold"></i><span class="src">    GPIO_InitStruct.Pin = GT911_INT_PIN;</span></div>
                    <div class="cl"><i class="ruler"></i><span class="num">44</span><i class="fold"></i><span class="src">    GPIO_InitStruct.Mode = GPIO_MODE_IT_FALLING;</span></div>
                    <div class="cl"><i class="ruler"></i><span class="num">45</span><i class="fold"></i><span class="src"><span class="cm">//  GPIO_InitStruct.Mode = GPIO_MODE_IT_RISING;</span></span></div>
                    <div class="cl"><i class="ruler"></i><span class="num">46</span><i class="fold"></i><span class="src">    GPIO_InitStruct.Pull = GPIO_NOPULL;</span></div>
                    <div class="cl"><i class="ruler"></i><span class="num">47</span><i class="fold"></i><span class="src">    HAL_GPIO_Init(GT911_CTRL_PORT, &amp;GPIO_InitStruct);</span></div>
                    <div class="cl"><i class="ruler"></i><span class="num">48</span><i class="fold"></i><span class="src"></span></div>
                    <div class="cl"><i class="ruler"></i><span class="num">49</span><i class="fold"></i><span class="src">    <span class="cm">/* EXTI interrupt <u>init</u>*/</span></span></div>
                    <div class="cl"><i class="ruler"></i><span class="num">50</span><svg class="fold"><use href="#fold"/></svg><span class="src"><span class="cm">//  HAL_NVIC_SetPriority(EXTI15_10_IRQn, 0, 0);</span></span></div>
                    <div class="cl"><i class="ruler"></i><span class="num">51</span><i class="fold"></i><span class="src"><span class="cm">//  HAL_NVIC_EnableIRQ(EXTI15_10_IRQn);</span></span></div>
                    <div class="cl"><i class="ruler"></i><span class="num">52</span><i class="fold"></i><span class="src">}</span></div>
                    <div class="cl"><i class="ruler"></i><span class="num">53</span><i class="fold"></i><span class="src"></span></div>
                    <div class="cl"><i class="ruler"></i><span class="num">54</span><i class="fold"></i><span class="src"></span></div>
                    <div class="cl"><i class="ruler"></i><span class="num">55</span><svg class="fold"><use href="#fold"/></svg><span class="src"><span class="kw">void</span> <b>GT911_Init</b>(<span class="kw">void</span>)</span></div>
                    <div class="cl"><i class="ruler"></i><span class="num">56</span><i class="fold"></i><span class="src">{</span></div>
                    <div class="cl"><i class="ruler"></i><span class="num">57</span><i class="fold"></i><span class="src">    INT_PIN_ReInit();                                                               <span class="cm">// <u>reinicjalizujemy</u> pin GT911_INT <u>jako</u> <u>zwykłe</u> GPIO</span></span></div>
                    <div class="cl"><i class="ruler"></i><span class="num">58</span><i class="fold"></i><span class="src"></span></div>
                    <div class="cl"><i class="ruler"></i><span class="num">59</span><i class="fold"></i><span class="src">    HAL_Delay(100);                                                                 <span class="cm">// <u>wykonujemy</u> <u>sprzetowy</u> reset</span></span></div>
                    <div class="cl"><i class="ruler"></i><span class="num">60</span><i class="fold"></i><span class="src">    GT911_RES_L;</span></div>
                    <div class="cl"><i class="ruler"></i><span class="num">61</span><i class="fold"></i><span class="src">    HAL_Delay(1);</span></div>
                    <div class="cl"><i class="ruler"></i><span class="num">62</span><i class="fold"></i><span class="src">    GT911_RES_H;</span></div>
                </div>
                <div class="vscroll editor-vscroll"><i class="vthumb"></i></div>
                <div class="overview"></div>
            </div>
            <div class="editor-hbar">
                <div class="hscroll editor-hscroll"><i class="arrow-left"></i><i class="arrow-right"></i></div>
            </div>
        </section>

        <!-- Outline -->
        <section class="panel outline">
            <div class="tabs">
                <div class="tab active-gray outline-tab"><svg class="i"><use href="#outline"/></svg><span>Outline</span><svg class="i tabx"><use href="#close"/></svg></div>
                <div class="tab targets-tab"><svg class="i"><use href="#target"/></svg><span>Build Targets</span></div>
                <div class="tools">
                    <svg class="i"><use href="#collapse"/></svg><svg class="i"><use href="#az"/></svg><svg class="i"><use href="#hidef"/></svg><svg class="i"><use href="#hides"/></svg><svg class="i"><use href="#gdot"/></svg><svg class="i"><use href="#hidem"/></svg><svg class="i"><use href="#dots"/></svg><svg class="i"><use href="#min"/></svg><svg class="i"><use href="#max"/></svg>
                </div>
            </div>
            <div class="outline-list">
                <div class="orow"><svg class="i"><use href="#inc"/></svg><span>gt911.h</span></div>
                <div class="orow"><svg class="i"><use href="#bdot"/></svg><span>touch_XY<em> : Touch_XY_t[]</em></span></div>
                <div class="orow"><svg class="i"><use href="#bdot"/></svg><sup>V</sup><span>GT911_TouchFlag<em> : volatile uint8_t</em></span></div>
                <div class="orow"><svg class="i"><use href="#bdot"/></svg><span>track_id<em> : uint8_t[]</em></span></div>
                <div class="orow"><svg class="i"><use href="#bdot"/></svg><sup>V</sup><span>GT911_Mode<em> : volatile uint8_t</em></span></div>
                <div class="orow"><svg class="i"><use href="#proto"/></svg><span>GT911_CalcChecksum(uint8_t*, uint8_t)<em> : uint8_t</em></span></div>
                <div class="orow"><svg class="i"><use href="#bdot"/></svg><span>IIC_Buff<em> : uint8_t[]</em></span></div>
                <div class="orow"><svg class="i"><use href="#gdot"/></svg><span>INT_PIN_ReInit(void)<em> : void</em></span></div>
                <div class="orow"><svg class="i"><use href="#gdot"/></svg><span>INT_PIN_Init(void)<em> : void</em></span></div>
                <div class="orow"><svg class="i"><use href="#gdot"/></svg><span>GT911_Init(void)<em> : void</em></span></div>
                <div class="orow"><svg class="i"><use href="#gdot"/></svg><span>GT911_Init_2(uint8_t)<em> : void</em></span></div>
                <div class="orow"><svg class="i"><use href="#gdot"/></svg><span>GT911_ReadConfig(void)<em> : void</em></span></div>
                <div class="orow"><svg class="i"><use href="#gdot"/></svg><span>GT911_ReConfig(void)<em> : void</em></span></div>
                <div class="orow"><svg class="i"><use href="#bdot"/></svg><span>backup_config<em> : uint8_t[]</em></span></div>
                <div class="orow"><svg class="i"><use href="#bdot"/></svg><span>config_table<em> : uint8_t[]</em></span></div>
                <div class="orow"><svg class="i"><use href="#gdot"/></svg><span>GT911_CalcChecksum(uint8_t*, uint8_t)<em> : uint8_t</em></span></div>
            </div>
        </section>

        <!-- Console -->
        <section class="panel console">
            <div class="tabs">
                <div class="tab problems-tab"><svg class="i"><use href="#problems"/></svg><span>Problems</span></div>
                <div class="tab tasks-tab"><svg class="i"><use href="#tasks"/></svg><span>Tasks</span></div>
                <div class="tab active-gray console-tab"><svg class="i"><use href="#console"/></svg><span>Console</span><svg class="i tabx"><use href="#close"/></svg></div>
                <div class="tab props-tab"><svg class="i"><use href="#props"/></svg><span>Properties</span></div>
                <div class="tools console-tools">
                    <svg class="i"><use href="#cross"/></svg><i class="tsep"></i>
                    <svg class="i"><use href="#ydown"/></svg><svg class="i"><use href="#yup"/></svg><span class="pressed"><svg class="i"><use href="#sync"/></svg></span><i class="tsep"></i>
                    <svg class="i"><use href="#twolocks"/></svg><svg class="i"><use href="#twolock2"/></svg><svg class="i"><use href="#glist"/></svg><svg class="i"><use href="#clearx"/></svg><span class="pressed"><svg class="i"><use href="#pinc"/></svg></span><i class="tsep"></i>
                    <svg class="i"><use href="#task"/></svg><svg class="i"><use href="#console"/></svg><svg class="d"><use href="#drop"/></svg><svg class="i"><use href="#new"/></svg><svg class="d"><use href="#drop"/></svg><svg class="i"><use href="#min"/></svg><svg class="i"><use href="#max"/></svg>
                </div>
            </div>
            <div class="console-title">CDT Build Console [TouchGFX_04_H7R7I8T6_Appli]</div>
            <div class="console-body">
                <div class="console-text">
                    <div class="cline blue">13:42:18 **** Incremental Build of configuration Debug for project TouchGFX_04_H7R7I8T6_Appli ****</div>
                    <div class="cline">make -j8 all</div>
                    <div class="cline">arm-none-eabi-gcc "E:/STM/workspace_TouchGFX/TouchGFX_04_H7R7I8T6/Appli/Core/Src/main.c" -mcpu=cortex-m7 -std=gnu11 -g3 -DDEBUG -DUSE_HAL_DRIVER -DSTM32H7R7xx -c -I../../../Appli/Core/Inc -I../../../Appli/TouchGFX/App -I../../../Appli/TouchGFX/target/generated -I../../../Appli/TouchGFX/target -I../../../Drivers/STM32H7RSxx_HAL_Driver/Inc -I../../../Drivers/CMSIS/Include</div>
                    <div class="cline">arm-none-eabi-g++ -o "TouchGFX_04_H7R7I8T6_Appli.elf" @"objects.list"  -l:libtouchgfx-float-abi-hard.a -mcpu=cortex-m7 -T"E:\STM\workspace_TouchGFX\TouchGFX_04_H7R7I8T6\STM32CubeIDE\Appli\STM32H7R7I8TX_ROMxspi1.ld" --specs=nosys.specs -Wl,-Map="TouchGFX_04_H7R7I8T6_Appli.map" -Wl,--gc-sections -static -L../../../Appli/Middlewares/ST/touchgfx/lib/core</div>
                    <div class="cline">D:/STM32_Files/STM32CubeIDE_2.2.0/STM32CubeIDE/plugins/com.st.stm32cube.ide.mcu.externaltools.gnu-tools-for-stm32.14.3.rel1.win32_1.0.100.202602081740/tools/bin/../lib/gcc/arm-none-eabi/14.3.1/../../../../arm-none-eabi/bin/ld.exe: ./Application/User/Core/main.o: in function `main':</div>
                    <div class="cline err">E:/STM/workspace_TouchGFX/TouchGFX_04_H7R7I8T6/Appli/Core/Src/main.c:110:(.text.main+0x44): undefined reference to `GT911_Init'</div>
                    <div class="cline err">D:/STM32_Files/STM32CubeIDE_2.2.0/STM32CubeIDE/plugins/com.st.stm32cube.ide.mcu.externaltools.gnu-tools-for-stm32.14.3.rel1.win32_1.0.100.202602081740/tools/bin/../lib/gcc/arm-none-eabi/14.3.1/../../../../arm-none-eabi/bin/ld.exe: (GT911_Init): Unknown destination type (ARM/Thumb) in ./Application/User/Core/main.o</div>
                    <div class="cline err">E:/STM/workspace_TouchGFX/TouchGFX_04_H7R7I8T6/Appli/Core/Src/main.c:110:(.text.main+0x44): dangerous relocation: unsupported relocation</div>
                    <div class="cline err">collect2.exe: error: ld returned 1 exit status</div>
                    <div class="cline err">make: *** [makefile:94: TouchGFX_04_H7R7I8T6_Appli.elf] Error 1</div>
                    <div class="cline">"make -j8 all" terminated with exit code 2. Build might be incomplete.</div>
                    <div class="cline"></div>
                    <div class="cline blue">13:42:19 Build Failed. 5 errors, 0 warnings. (took 1s.779ms)</div>
                </div>
                <div class="console-vbar"><i class="arrow-up"></i><i class="arrow-down"></i></div>
            </div>
            <div class="hscroll console-hscroll"><i class="hthumb"></i></div>
        </section>

        <!-- Build Analyzer -->
        <section class="panel analyzer">
            <div class="tabs">
                <div class="tab active-gray analyzer-tab"><svg class="i"><use href="#bin"/></svg><span>Build Analyzer</span><svg class="i tabx"><use href="#close"/></svg></div>
                <div class="tab stack-tab"><svg class="i"><use href="#stack"/></svg><span>Static Stack Analyzer</span></div>
                <div class="tab cyclo-tab"><svg class="i"><use href="#cyclo"/></svg><span>Cyclomatic Complexity</span></div>
                <div class="tools">
                    <svg class="i"><use href="#task"/></svg><svg class="i"><use href="#refresh"/></svg><svg class="i"><use href="#dots"/></svg><svg class="i"><use href="#min"/></svg><svg class="i"><use href="#max"/></svg>
                </div>
            </div>
            <div class="subtabs">
                <span class="subtab on">Memory Regions</span><span class="subtab">Memory Details</span>
            </div>
            <div class="mem-wrap">
                <table class="mem">
                    <thead><tr><th>Region</th><th>Start address</th><th>End address</th><th>Size</th><th>Free</th><th>Used</th><th>Usage (%)</th></tr></thead>
                    <tbody>
                        <tr><td></td><td></td><td></td><td></td><td></td><td></td><td></td></tr>
                        <tr><td></td><td></td><td></td><td></td><td></td><td></td><td></td></tr>
                        <tr><td></td><td></td><td></td><td></td><td></td><td></td><td></td></tr>
                        <tr><td></td><td></td><td></td><td></td><td></td><td></td><td></td></tr>
                        <tr><td></td><td></td><td></td><td></td><td></td><td></td><td></td></tr>
                        <tr><td></td><td></td><td></td><td></td><td></td><td></td><td></td></tr>
                        <tr><td></td><td></td><td></td><td></td><td></td><td></td><td></td></tr>
                        <tr><td></td><td></td><td></td><td></td><td></td><td></td><td></td></tr>
                        <tr><td></td><td></td><td></td><td></td><td></td><td></td><td></td></tr>
                        <tr><td></td><td></td><td></td><td></td><td></td><td></td><td></td></tr>
                        <tr><td></td><td></td><td></td><td></td><td></td><td></td><td></td></tr>
                    </tbody>
                </table>
            </div>
            <div class="hscroll mem-hscroll"><i class="hthumb"></i></div>
        </section>
    </main>

    <!-- Status bar -->
    <footer class="statusbar">
        <svg class="i"><use href="#ide"/><use href="#mark"/></svg>
        <span>TouchGFX_04_H7R7I8T6_Appli</span>
        <i class="status-grip"></i>
    </footer>
</body>
</html>
```

FILE: styles.css
```css
* {
    box-sizing: border-box;
}

html, body {
    margin: 0;
    height: 1392px;
    overflow: hidden;
}

body {
    display: flex;
    flex-direction: column;
    background-color: #f4f4f4;
    color: #1a1a1a;
    font-family: "Noto Sans", "Open Sans", sans-serif;
    font-size: 11.3px;
}

.defs {
    display: none;
}

.i {
    width: 16px;
    height: 16px;
    flex: none;
}

.d {
    width: 8px;
    height: 8px;
    flex: none;
}

/* title + menu */
.titlebar {
    height: 23px;
    display: flex;
    align-items: center;
    padding-left: 2px;
    background-color: #f1f1f1;
    font-size: 11.9px;
}

.title-text {
    margin-left: 6px;
}

.winbtns {
    margin-left: auto;
    display: flex;
    align-items: center;
    height: 100%;
    padding-right: 20px;
}

.winbtn {
    display: block;
}

.win-min {
    width: 10px;
    height: 1px;
    background-color: #333;
}

.win-max {
    width: 9px;
    height: 10px;
    margin-left: 36px;
    border: 1px solid #333;
    box-shadow: 1px -1px 0 #888;
}

.win-close {
    width: 11px;
    height: 11px;
    margin-left: 36px;
}

.menubar {
    height: 19px;
    display: flex;
    align-items: center;
    padding-left: 8px;
    background-color: #fff;
    border-bottom: 1px solid #e6e6e6;
    font-size: 11.5px;
    gap: 13px;
}

/* main toolbar */
.toolbar {
    height: 30px;
    display: flex;
    align-items: center;
    background-color: #f8f8f8;
    border-bottom: 1px solid #e2e2e2;
}

.tb {
    width: 23px;
    height: 22px;
    flex: none;
    display: flex;
    align-items: center;
    justify-content: center;
}

.tb.on {
    background-color: #cfe3f3;
    border: 1px solid #a8cce6;
    border-radius: 2px;
}

.dd {
    width: 13px;
    margin-right: 2px;
    flex: none;
    display: flex;
    align-items: center;
    justify-content: center;
}

.grip {
    width: 5px;
    height: 16px;
    flex: none;
    background-image: radial-gradient(circle, #a9a9a9 1px, transparent 1.2px);
    background-size: 5px 4px;
}

.sep {
    width: 1px;
    height: 18px;
    margin: 0 6px 0 2px;
    flex: none;
    background-color: #8f8f8f;
}

.toolbar-right {
    margin-left: auto;
    display: flex;
    align-items: center;
    padding-right: 3px;
}

/* panels */
.workbench {
    flex: 1;
    display: grid;
    grid-template-columns: 354px 1fr 686px;
    grid-template-rows: 966px 322px;
    column-gap: 4px;
    row-gap: 5px;
}

.panel {
    min-width: 0;
    min-height: 0;
    display: flex;
    flex-direction: column;
    background-color: #f8f8f8;
    border: 1px solid #e6e6e6;
    overflow: hidden;
}

.left {
    grid-row: 1 / span 2;
    border-left: 0;
}

.editor {
    grid-column: 2;
    grid-row: 1;
}

.outline {
    grid-column: 3;
    grid-row: 1;
    border-right: 0;
}

.console {
    grid-column: 2;
    grid-row: 2;
}

.analyzer {
    grid-column: 3;
    grid-row: 2;
    border-right: 0;
}

.tabs {
    height: 24px;
    flex: none;
    display: flex;
    align-items: stretch;
    border-bottom: 1px solid #e4e4e4;
    font-size: 11.3px;
}

.tab {
    display: flex;
    align-items: center;
    flex: none;
    gap: 4px;
    white-space: nowrap;
}

.tabx {
    width: 14px;
    height: 14px;
}

.active-blue {
    box-shadow: inset 0 -2px 0 #3b6b90;
}

.active-gray {
    box-shadow: inset 0 -3px 0 #848484;
}

.explorer-tab {
    width: 133px;
    padding-left: 4px;
}

.explorer-tab .tabx {
    margin-left: 6px;
}

.tools {
    margin-left: auto;
    display: flex;
    align-items: center;
    gap: 7px;
    padding-right: 6px;
}

/* tree */
.tree-wrap {
    flex: 1;
    min-height: 0;
    display: flex;
}

.tree {
    flex: 1;
    min-width: 0;
    overflow: hidden;
    background-color: #fbfbfb;
}

.row {
    height: 18px;
    display: flex;
    align-items: center;
    white-space: nowrap;
}

.row > .i, .selected > .i {
    margin-right: 6px;
}

.chev {
    width: 12px;
    height: 12px;
    margin-right: 2px;
    flex: none;
}

.l0 { padding-left: 5px; }
.l1 { padding-left: 21px; }
.l2 { padding-left: 37px; }
.l3 { padding-left: 53px; }
.l4 { padding-left: 69px; }
.l5 { padding-left: 85px; }
.l6 { padding-left: 101px; }

.selected {
    display: flex;
    align-items: center;
    height: 18px;
    margin-left: -1px;
    padding-right: 2px;
    background-color: #cde8ff;
    border: 1px solid #2c7fb8;
}

.strong {
    font-weight: 700;
}

em {
    font-style: normal;
    color: #9c8a63;
}

.vscroll {
    flex: none;
    display: flex;
    justify-content: center;
    background-color: #f3f3f3;
}

.vthumb {
    width: 3px;
    background-color: #8a8a8a;
}

.tree-vscroll {
    width: 17px;
    padding-top: 74px;
    padding-bottom: 200px;
}

.hscroll {
    flex: none;
    display: flex;
    align-items: center;
    background-color: #f1f1f1;
}

.hthumb {
    height: 3px;
    background-color: #8a8a8a;
}

.tree-hscroll {
    height: 17px;
    padding-left: 18px;
}

.tree-hscroll .hthumb {
    width: 241px;
}

/* editor */
.first {
    width: 92px;
    padding-left: 4px;
}

.second {
    width: 81px;
}

.current {
    width: 87px;
    padding-left: 15px;
    background-color: #fff;
    box-shadow: inset 0 3px 0 #848484;
}

.current .tabx {
    margin-left: 3px;
}

.editor-body {
    flex: 1;
    min-height: 0;
    display: flex;
}

.code {
    flex: 1;
    min-width: 0;
    overflow: hidden;
    background-color: #fff;
    font-family: "Liberation Mono", "DejaVu Sans Mono", monospace;
    font-size: 11.67px;
}

.cl {
    height: 15px;
    line-height: 15px;
    display: flex;
    white-space: pre;
    color: #000;
}

.ruler {
    width: 12px;
    flex: none;
    background-color: #f8f8f8;
}

.num {
    width: 21px;
    flex: none;
    text-align: right;
    color: #787878;
}

.fold {
    width: 11.5px;
    height: 15px;
    flex: none;
}

.src {
    flex: 1;
}

.now .src {
    background-color: #e8f2fe;
}

.cm, .cm u {
    color: #3f7f5f;
}

.kw {
    color: #7f0055;
    font-weight: 700;
}

.str {
    color: #2a00ff;
}

.src u {
    text-decoration: underline wavy #d9534f 1px;
    text-underline-offset: 1px;
}

.editor-vscroll {
    width: 16px;
    padding-top: 17px;
    padding-bottom: 705px;
}

.overview {
    width: 13px;
    flex: none;
    background-color: #fafafa;
}

.editor-hbar {
    height: 16px;
    flex: none;
    display: flex;
    padding-left: 44px;
    background-color: #fff;
}

.editor-hscroll {
    flex: 1;
    justify-content: space-between;
    padding: 0 26px 0 3px;
    margin-right: 13px;
}

.arrow-left {
    border-style: solid;
    border-width: 5px 5px 5px 0;
    border-color: transparent #a0a0a0 transparent transparent;
}

.arrow-right {
    border-style: solid;
    border-width: 5px 0 5px 5px;
    border-color: transparent transparent transparent #a0a0a0;
}

/* outline */
.outline-tab {
    width: 88px;
    padding-left: 4px;
}

.targets-tab {
    padding-left: 6px;
}

.outline-list {
    flex: 1;
    padding-left: 26px;
}

.orow {
    height: 18px;
    display: flex;
    align-items: center;
    white-space: nowrap;
}

.orow span {
    margin-left: 11px;
}

.orow sup {
    width: 8px;
    margin-right: -8px;
    margin-left: 1px;
    align-self: flex-start;
    font-size: 8px;
    line-height: 12px;
    color: #a5325a;
}

/* console */
.problems-tab {
    width: 87px;
    padding-left: 2px;
}

.tasks-tab {
    width: 52px;
}

.console-tab {
    width: 93px;
    padding-left: 5px;
    gap: 2px;
}

.console-tab .tabx {
    margin-left: 4px;
}

.props-tab {
    padding-left: 4px;
    gap: 3px;
}

.console-tools {
    padding-right: 4px;
    gap: 6px;
}

.tsep {
    width: 1px;
    height: 18px;
    background-color: #c9c9c9;
}

.pressed {
    display: flex;
    background-color: #cfe3f3;
    outline: 2px solid #cfe3f3;
}

.console-title {
    height: 17px;
    flex: none;
    padding-left: 1px;
    line-height: 15px;
    border-bottom: 2px solid #a9a9a9;
    white-space: nowrap;
}

.console-body {
    flex: 1;
    min-height: 0;
    display: flex;
}

.console-text {
    flex: 1;
    min-width: 0;
    background-color: #fff;
    font-family: "Liberation Mono", "DejaVu Sans Mono", monospace;
    font-size: 11.67px;
    color: #000;
}

.cline {
    height: 15px;
    line-height: 15px;
    padding-left: 1px;
    overflow: hidden;
    white-space: pre;
}

.err {
    background-color: #fde6e1;
}

.blue {
    color: #1a1a9c;
}

.console-vbar {
    width: 16px;
    flex: none;
    display: flex;
    flex-direction: column;
    align-items: center;
    justify-content: space-between;
    padding: 8px 0;
    background-color: #f6f6f6;
}

.arrow-up {
    border-style: solid;
    border-width: 0 4px 7px 4px;
    border-color: transparent transparent #a8a8a8 transparent;
}

.arrow-down {
    border-style: solid;
    border-width: 7px 4px 0 4px;
    border-color: #a8a8a8 transparent transparent transparent;
}

.console-hscroll {
    height: 16px;
    padding-left: 16px;
}

.console-hscroll .hthumb {
    width: 688px;
}

/* build analyzer */
.analyzer-tab {
    width: 126px;
    padding-left: 5px;
}

.analyzer-tab .tabx {
    margin-left: 1px;
}

.stack-tab {
    padding-left: 4px;
    gap: 3px;
    width: 138px;
}

.cyclo-tab {
    gap: 3px;
}

.subtabs {
    height: 19px;
    flex: none;
    margin: 28px 5px 0 6px;
    display: flex;
    border-bottom: 1px solid #9a9a9a;
}

.subtab {
    padding: 0 3px;
    line-height: 18px;
    border-right: 1px solid #bdbdbd;
    white-space: nowrap;
}

.subtab.on {
    box-shadow: inset 0 2px 0 #777;
}

.mem-wrap {
    height: 224px;
    flex: none;
    margin: 3px 5px 0 8px;
    overflow: hidden;
    background-color: #fff;
}

.mem {
    width: 700px;
    border-collapse: collapse;
    table-layout: fixed;
    font-size: 11.3px;
    line-height: 14px;
}

.mem th {
    height: 24px;
    padding: 0 0 0 5px;
    text-align: left;
    font-weight: 400;
    background-color: #fdfdfd;
    border-right: 1px solid #ececec;
}

.mem td {
    height: 19px;
    padding: 0;
    border-right: 1px solid #ececec;
    border-bottom: 1px solid #ececec;
}

.mem tbody tr:first-child td {
    height: 18px;
}

.mem-hscroll {
    height: 16px;
    margin: 0 5px 0 8px;
    padding-left: 17px;
}

.mem-hscroll .hthumb {
    width: 607px;
}

/* status */
.statusbar {
    height: 27px;
    flex: none;
    display: flex;
    align-items: center;
    padding-left: 3px;
    background-color: #f4f4f4;
    font-size: 11.9px;
}

.statusbar span {
    margin-left: 5px;
}

.status-grip {
    width: 3px;
    height: 15px;
    margin-left: 2936px;
    background-image: radial-gradient(circle, #9a9a9a 1px, transparent 1.2px);
    background-size: 3px 4px;
}
```
